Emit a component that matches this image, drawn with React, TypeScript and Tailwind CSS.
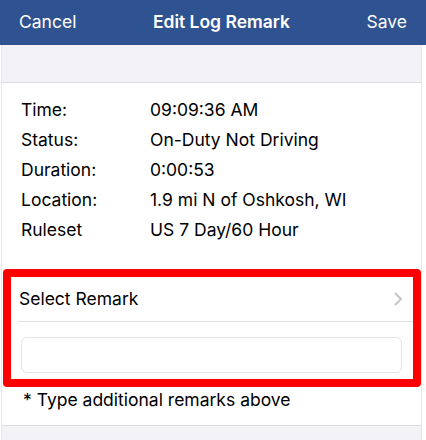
const details = [
  { label: 'Time:', value: '09:09:36 AM' },
  { label: 'Status:', value: 'On-Duty Not Driving' },
  { label: 'Duration:', value: '0:00:53' },
  { label: 'Location:', value: '1.9 mi N of Oshkosh, WI' },
  { label: 'Ruleset', value: 'US 7 Day/60 Hour' },
]

export default function App() {
  return (
    <div className="w-[426px] h-[440px] overflow-hidden bg-white font-['Inter',sans-serif] text-[17.5px] text-black">
      {/* Nav bar */}
      <header className="h-[45px] bg-[#2f5290] flex items-center justify-between px-[19px] text-white">
        <span>Cancel</span>
        <span className="font-semibold">Edit Log Remark</span>
        <span>Save</span>
      </header>

      <div className="ml-[1px] w-[421px] border-x border-[#e6e6eb]">
        <div className="h-[38px] bg-[#f2f2f7] border-b border-[#dcdce1]" />

        <section className="bg-white pt-[12px] pb-[14px] border-b border-[#dcdce1]">
          <div className="flex flex-col">
            {details.map((row) => (
              <div key={row.label} className="h-[30px] flex items-center">
                <span className="w-[148px] pl-[19px]">{row.label}</span>
                <span>{row.value}</span>
              </div>
            ))}
          </div>

          {/* Remark box */}
          <div className="mt-[24px] ml-[1px] w-[418px] border-[8px] border-[#ff0000] rounded-[4px] bg-white">
            <div className="h-[44px] flex items-center justify-between pl-[8px] pr-[10px]">
              <span>Select Remark</span>
              <svg width="9" height="14" viewBox="0 0 9 14" fill="none" className="text-[#c4c4c9]">
                <polyline points="1.5,1.5 7,7 1.5,12.5" stroke="currentColor" strokeWidth="2" strokeLinecap="round" strokeLinejoin="round" />
              </svg>
            </div>
            <div className="ml-[7px] h-px bg-[#e2e2e6]" />
            <div className="mt-[15px] mb-[6px] ml-[10px] w-[381px] h-[36px] rounded-[6px] border border-[#e4e4e8]" />
          </div>

          <p className="mt-[2px] pl-[21px] leading-[22px]">* Type additional remarks above</p>
        </section>

        <div className="h-[20px] bg-[#f2f2f7]" />
      </div>
    </div>
  )
}
